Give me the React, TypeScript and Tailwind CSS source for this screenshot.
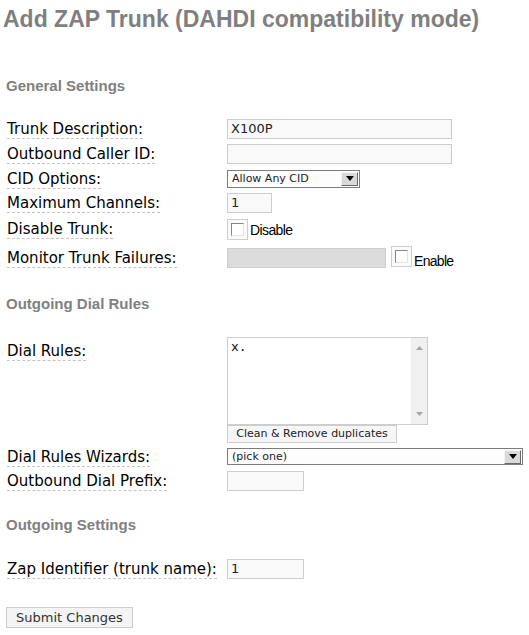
import type { ReactNode } from "react";

const labelFont = { fontFamily: '"DejaVu Sans", Verdana, sans-serif' };

function Label({ children }: { children: ReactNode }) {
  return (
    <div className="w-[220px] shrink-0">
      <span className="inline-block border-b border-dashed border-[#c4c4c4] text-[15px] leading-[17px] text-black font-['DejaVu_Sans',Verdana,sans-serif]">
        {children}
      </span>
    </div>
  );
}

function TextBox({ w, value, disabled }: { w: string; value?: string; disabled?: boolean }) {
  return (
    <div
      className={
        "flex h-[20px] items-center border border-[#cdcdcd] pl-[3px] text-[13px] text-[#222] font-['DejaVu_Sans',Verdana,sans-serif] " +
        w +
        (disabled ? " bg-[#dcdcdc]" : " bg-[#f9f9f9]")
      }
    >
      {value}
    </div>
  );
}

function Arrow() {
  return (
    <svg width="8" height="5" viewBox="0 0 8 5">
      <path d="M0 0H8L4 5Z" fill="#000" />
    </svg>
  );
}

function Select({ w, h, value }: { w: string; h: string; value: string }) {
  return (
    <div className={"flex items-center border border-[#7c7c7c] bg-[#fdfdfd] " + w + " " + h}>
      <span className="flex-1 pl-[4px] text-[11px] leading-none text-[#222] font-['DejaVu_Sans',Verdana,sans-serif]">
        {value}
      </span>
      <span className="mr-[1px] flex h-[14px] w-[17px] items-center justify-center border border-t-[#f4f4f4] border-l-[#f4f4f4] border-r-[#6a6a6a] border-b-[#6a6a6a] bg-[#d9d9d9]">
        <Arrow />
      </span>
    </div>
  );
}

function Check() {
  return (
    <span className="flex h-[21px] w-[21px] shrink-0 items-center justify-center border border-[#cdcdcd] bg-[#fafafa]">
      <span className="h-[13px] w-[13px] border border-t-[#858585] border-l-[#858585] border-b-[#e4e4e4] border-r-[#e4e4e4] bg-white" />
    </span>
  );
}

function Header({ children }: { children: ReactNode }) {
  return (
    <div className="pl-[6px] text-[15px] leading-[17px] font-bold text-[#808080] font-['Liberation_Sans',Arial,sans-serif]">
      {children}
    </div>
  );
}

export default function App() {
  return (
    <div className="min-h-[635px] w-[529px] bg-white" style={labelFont}>
      <h1 className="pt-[6px] pl-[3px] text-[23px] leading-[27px] font-bold text-[#7f7f7f] font-['Liberation_Sans',Arial,sans-serif]">
        Add ZAP Trunk (DAHDI compatibility mode)
      </h1>

      <div className="mt-[44px]">
        <Header>General Settings</Header>
      </div>

      <div className="mt-[22px] flex flex-col pl-[7px]">
        <div className="flex h-[25px] items-center">
          <Label>Trunk Description:</Label>
          <TextBox w="w-[225px]" value="X100P" />
        </div>
        <div className="flex h-[25px] items-center">
          <Label>Outbound Caller ID:</Label>
          <TextBox w="w-[225px]" />
        </div>
        <div className="flex h-[25px] items-center">
          <Label>CID Options:</Label>
          <Select w="w-[133px]" h="h-[18px]" value="Allow Any CID" />
        </div>
        <div className="flex h-[24px] items-center">
          <Label>Maximum Channels:</Label>
          <TextBox w="w-[45px]" value="1" />
        </div>
        <div className="flex h-[28px] items-center">
          <Label>Disable Trunk:</Label>
          <Check />
          <span className="ml-[2px] mt-[2px] text-[14px] tracking-[-0.6px] text-black font-['Liberation_Sans',Arial,sans-serif]">
            Disable
          </span>
        </div>
        <div className="flex h-[30px] items-center">
          <Label>Monitor Trunk Failures:</Label>
          <TextBox w="w-[159px]" disabled />
          <span className="ml-[5px] -mt-[3px]">
            <Check />
          </span>
          <span className="ml-[2px] mt-[7px] text-[14px] tracking-[-0.7px] text-black font-['Liberation_Sans',Arial,sans-serif]">
            Enable
          </span>
        </div>
      </div>

      <div className="mt-[22px]">
        <Header>Outgoing Dial Rules</Header>
      </div>

      <div className="mt-[25px] flex flex-col pl-[7px]">
        <div className="flex items-start">
          <div className="mt-[2px]">
            <Label>Dial Rules:</Label>
          </div>
          <div className="flex flex-col">
            <div className="flex h-[88px] w-[201px] border border-[#cdcdcd] bg-white">
              <textarea
                readOnly
                value="x."
                className="flex-1 resize-none overflow-hidden bg-white pt-[2px] pl-[3px] text-[13px] leading-[15px] text-black outline-none font-['Liberation_Mono','Courier_New',monospace]"
              />
              <div className="flex w-[17px] flex-col items-center justify-between border-l border-[#fafafa] bg-[#f0f0f0] pt-[8px] pb-[8px]">
                <svg width="7" height="4" viewBox="0 0 7 4">
                  <path d="M0 4H7L3.5 0Z" fill="#a6a6a6" />
                </svg>
                <svg width="7" height="4" viewBox="0 0 7 4">
                  <path d="M0 0H7L3.5 4Z" fill="#a6a6a6" />
                </svg>
              </div>
            </div>
            <div className="flex h-[18px] w-[170px] items-center justify-center border border-[#cdcdcd] bg-[#f6f6f6] text-[11px] text-[#222] font-['DejaVu_Sans',Verdana,sans-serif]">
              Clean &amp; Remove duplicates
            </div>
          </div>
        </div>
        <div className="flex h-[27px] items-center">
          <Label>Dial Rules Wizards:</Label>
          <Select w="w-[296px]" h="h-[17px]" value="(pick one)" />
        </div>
        <div className="flex h-[22px] items-center">
          <Label>Outbound Dial Prefix:</Label>
          <TextBox w="w-[77px]" />
        </div>
      </div>

      <div className="mt-[24px]">
        <Header>Outgoing Settings</Header>
      </div>

      <div className="mt-[21px] flex flex-col pl-[7px]">
        <div className="flex h-[30px] items-center">
          <Label>Zap Identifier (trunk name):</Label>
          <TextBox w="w-[77px]" value="1" />
        </div>
      </div>

      <div className="mt-[21px] pl-[6px]">
        <button className="h-[21px] w-[127px] border border-[#cdcdcd] bg-[#f4f4f4] text-[13px] leading-none text-[#333] font-['DejaVu_Sans',Verdana,sans-serif]">
          Submit Changes
        </button>
      </div>
    </div>
  );
}
